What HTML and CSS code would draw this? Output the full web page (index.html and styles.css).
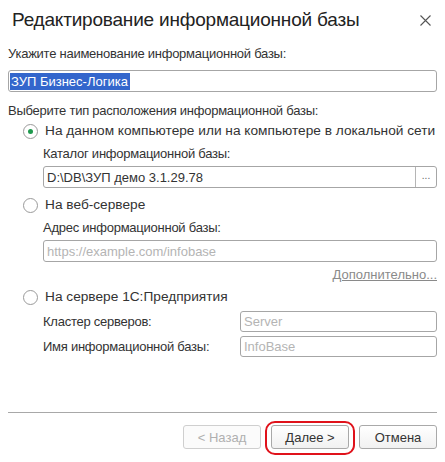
FILE: index.html
```html
<!DOCTYPE html>
<html lang="ru">
<head>
  <meta charset="UTF-8" />
  <title>Редактирование информационной базы</title>
  <link rel="stylesheet" href="styles.css">
</head>
<body>
  <div class="dialog">
    <div class="title-bar">
      <span class="title">Редактирование информационной базы</span>
      <span class="close">
        <svg width="11" height="11" viewBox="0 0 11 11"><path d="M0.5 0.5L10.5 10.5M10.5 0.5L0.5 10.5" stroke="#555" stroke-width="1.1" fill="none"/></svg>
      </span>
    </div>

    <div class="text-row label-name">Укажите наименование информационной базы:</div>
    <div class="field field-name"><span class="selected">ЗУП Бизнес-Логика</span></div>

    <div class="text-row label-type">Выберите тип расположения информационной базы:</div>

    <div class="group">
      <div class="radio-row radio-first">
        <span class="radio checked"></span>
        <span>На данном компьютере или на компьютере в локальной сети</span>
      </div>
      <div class="sub">
        <div class="text-row sub-label">Каталог информационной базы:</div>
        <div class="field field-path">
          <span class="field-text">D:\DB\ЗУП демо 3.1.29.78</span>
          <span class="choose">...</span>
        </div>
      </div>

      <div class="radio-row radio-web">
        <span class="radio"></span>
        <span>На веб-сервере</span>
      </div>
      <div class="sub">
        <div class="text-row sub-label">Адрес информационной базы:</div>
        <div class="field field-url"><span class="placeholder">https://example.com/infobase</span></div>
        <div class="text-row more"><span class="link">Дополнительно...</span></div>
      </div>

      <div class="radio-row radio-server">
        <span class="radio"></span>
        <span>На сервере 1С:Предприятия</span>
      </div>
      <div class="sub">
        <div class="form-row row-cluster">
          <span class="row-label">Кластер серверов:</span>
          <div class="field field-short"><span class="placeholder">Server</span></div>
        </div>
        <div class="form-row row-base">
          <span class="row-label">Имя информационной базы:</span>
          <div class="field field-short"><span class="placeholder">InfoBase</span></div>
        </div>
      </div>
    </div>

    <div class="footer">
      <button class="btn" disabled>&lt; Назад</button>
      <button class="btn btn-marked">Далее &gt;</button>
      <button class="btn">Отмена</button>
    </div>
  </div>
</body>
</html>
```

FILE: styles.css
```css
* {
  box-sizing: border-box;
}

body {
  margin: 0;
  background-color: #ffffff;
  font-family: 'Liberation Sans', Arial, sans-serif;
  font-size: 13px;
  color: #333333;
}

.dialog {
  width: 445px;
  height: 462px;
  padding: 0 8px;
}

.title-bar {
  display: flex;
  align-items: center;
  justify-content: space-between;
  height: 40px;
  padding: 0 6px 0 4px;
}

.title {
  font-size: 19px;
  letter-spacing: -0.2px;
  color: #222222;
}

.close {
  display: flex;
  padding-top: 1px;
}

.text-row {
  height: 16px;
  line-height: 16px;
  white-space: nowrap;
  letter-spacing: -0.25px;
}

.label-name {
  margin-top: 6px;
}

.field {
  display: flex;
  align-items: center;
  height: 22px;
  border: 1px solid #a6a6a6;
  border-radius: 3px;
  background-color: #ffffff;
  white-space: nowrap;
  overflow: hidden;
}

.field-name {
  margin-top: 8px;
  padding-left: 1px;
}

.selected {
  background-color: #3366cc;
  color: #ffffff;
  line-height: 17px;
  padding: 0 2px 0 1px;
}

.label-type {
  margin-top: 11px;
}

.group {
  padding-left: 15px;
}

.radio-row {
  display: flex;
  align-items: center;
  gap: 7px;
  height: 16px;
  line-height: 16px;
  font-size: 13.7px;
  white-space: nowrap;
}

.radio {
  width: 15px;
  height: 15px;
  border: 1px solid #9a9a9a;
  border-radius: 50%;
  display: flex;
  align-items: center;
  justify-content: center;
  background-color: #ffffff;
}

.radio.checked::after {
  content: "";
  width: 5px;
  height: 5px;
  border-radius: 50%;
  background-color: #1f9a4e;
}

.radio-first {
  margin-top: 4px;
}

.sub {
  padding-left: 20px;
}

.sub-label {
  margin-top: 7px;
}

.field-path {
  margin-top: 4px;
  justify-content: space-between;
}

.field-text {
  padding-left: 3px;
}

.choose {
  width: 21px;
  height: 100%;
  border-left: 1px solid #b5b5b5;
  text-align: center;
  line-height: 18px;
  font-size: 10px;
  color: #666666;
}

.radio-web {
  margin-top: 9px;
}

.field-url {
  margin-top: 4px;
}

.placeholder {
  padding-left: 3px;
  color: #b4b4b4;
}

.more {
  margin-top: 5px;
  text-align: right;
  letter-spacing: 0;
}

.link {
  color: #8a8a8a;
  text-decoration: underline;
}

.radio-server {
  margin-top: 6px;
}

.form-row {
  display: flex;
  align-items: center;
}

.row-cluster {
  margin-top: 6px;
}

.row-base {
  margin-top: 4px;
}

.row-label {
  width: 197px;
  white-space: nowrap;
  letter-spacing: -0.25px;
}

.field-short {
  flex: 1;
  height: 21px;
}

.footer {
  display: flex;
  justify-content: flex-end;
  gap: 10px;
  margin-top: 55px;
  padding-top: 12px;
  border-top: 1px solid #a8a8a8;
}

.btn {
  position: relative;
  width: 78px;
  height: 24px;
  border: 1px solid #a9a9a9;
  border-radius: 3px;
  background: linear-gradient(#ffffff, #f1f1f1);
  font-family: 'Liberation Sans', Arial, sans-serif;
  font-size: 13px;
  color: #333333;
  padding: 0;
}

.btn:disabled {
  border-color: #cfcfcf;
  color: #b0b0b0;
  background: #fbfbfb;
}

.btn-marked::after {
  content: "";
  position: absolute;
  top: -5px;
  left: -7px;
  right: -7px;
  bottom: -7px;
  border: 2px solid #e0121b;
  border-radius: 10px;
}
```
